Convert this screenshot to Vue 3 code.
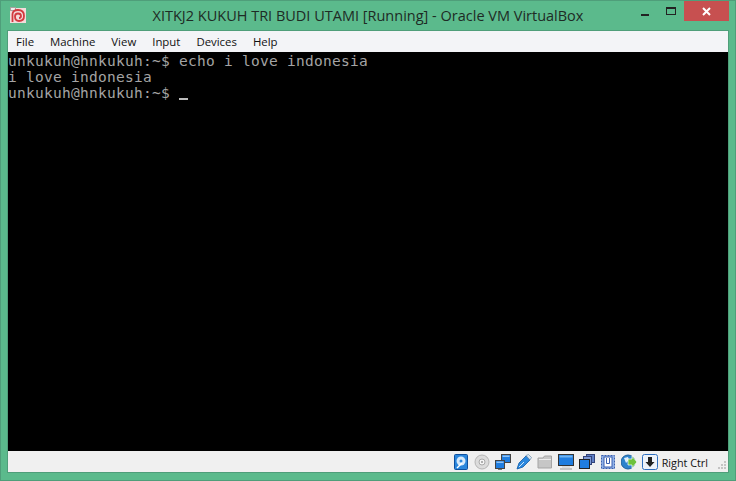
<script setup>
const menus = ['File', 'Machine', 'View', 'Input', 'Devices', 'Help']
</script>

<template>
  <div class="win">
    <header class="titlebar">
      <svg class="appicon" width="16" height="16" viewBox="0 0 16 16">
        <rect x="0" y="1" width="16" height="15" fill="#f3dcdb" />
        <rect x="0" y="0" width="6" height="4" fill="#a9a29e" />
        <rect x="1" y="1" width="4" height="2" fill="#eee" />
        <path d="M2.5 15V7Q3 3 8 3Q14 3 14 9Q14 14 9 14Q5 14 5 9.5Q5 6.5 8 6.5Q11 6.5 11 9Q11 11 9 11" fill="none" stroke="#d23a40" stroke-width="1.8" />
      </svg>
      <span class="title">XITKJ2 KUKUH TRI BUDI UTAMI [Running] - Oracle VM VirtualBox</span>
      <div class="controls">
        <span class="btn"><i class="min"></i></span>
        <span class="btn"><i class="max"></i></span>
        <span class="close">
          <svg width="9" height="9" viewBox="0 0 9 9"><path d="M1 1L8 8M8 1L1 8" stroke="#fff" stroke-width="2" /></svg>
        </span>
      </div>
    </header>
    <div class="client">
      <nav class="menubar">
        <span v-for="m in menus" :key="m">{{ m }}</span>
      </nav>
      <pre class="term">unkukuh@hnkukuh:~$ echo i love indonesia
i love indonesia
unkukuh@hnkukuh:~$ <b class="cursor"></b></pre>
      <footer class="status">
        <svg class="ico" width="16" height="16" viewBox="0 0 16 16">
          <rect x="1.5" y="0.5" width="13" height="15" rx="1" fill="#2a86dc" stroke="#0d4f9e" />
          <circle cx="8" cy="7" r="4.5" fill="#d6e9fa" />
          <circle cx="8" cy="7" r="1.5" fill="#2a86dc" />
          <path d="M4 14L9 9" stroke="#fff" stroke-width="1.5" />
        </svg>
        <svg class="ico" width="16" height="16" viewBox="0 0 16 16">
          <circle cx="8" cy="8" r="7" fill="#dcdcdc" stroke="#b5b5b5" />
          <circle cx="8" cy="8" r="3" fill="#f5f5f5" stroke="#aaa" />
          <circle cx="8" cy="8" r="1" fill="#999" />
        </svg>
        <svg class="ico" width="16" height="16" viewBox="0 0 16 16">
          <rect x="6.5" y="0.5" width="9" height="8" fill="#1f7de0" stroke="#444" />
          <rect x="7.5" y="1.5" width="7" height="1.5" fill="#8fc4f5" />
          <rect x="0.5" y="6.5" width="9" height="8" fill="#1f7de0" stroke="#444" />
          <rect x="1.5" y="7.5" width="7" height="1.5" fill="#8fc4f5" />
          <path d="M3 15.5H7" stroke="#777" />
        </svg>
        <svg class="ico" width="16" height="16" viewBox="0 0 16 16">
          <path d="M1 15L3 9L10 2L14 6L7 13Z" fill="#2b88de" stroke="#0d5aa8" stroke-width="0.8" />
          <path d="M10 1.5L12.5 0.5L15.5 3.5L14 6Z" fill="#d8e6f2" stroke="#5d7f9e" stroke-width="0.6" />
          <path d="M3 13L8 8" stroke="#cfe6fa" />
        </svg>
        <svg class="ico" width="16" height="16" viewBox="0 0 16 16">
          <path d="M1 14V4H6L7.5 2H14.5V14Z" fill="#c6c6c6" stroke="#a5a5a5" />
          <path d="M2 5H14V6H2Z" fill="#ededed" />
        </svg>
        <svg class="ico" width="16" height="16" viewBox="0 0 16 16">
          <rect x="0.5" y="0.5" width="15" height="11" fill="#1f7de0" stroke="#333" />
          <rect x="1.5" y="1.5" width="13" height="2" fill="#6fb3f0" />
          <rect x="4" y="12" width="8" height="2" fill="#ddd" />
          <path d="M2 15H14" stroke="#999" />
        </svg>
        <svg class="ico" width="16" height="16" viewBox="0 0 16 16">
          <rect x="7.5" y="0.5" width="8" height="8" fill="#5f7fc6" stroke="#33437a" />
          <rect x="4.5" y="2.5" width="8" height="8" fill="#7f9ad6" stroke="#33437a" />
          <rect x="0.5" y="5.5" width="10" height="9" fill="#1f7de0" stroke="#222" />
        </svg>
        <svg class="ico" width="16" height="16" viewBox="0 0 16 16">
          <rect x="1.5" y="1.5" width="13" height="13" fill="#8eb1e8" stroke="#3a5fae" stroke-dasharray="2 1" />
          <rect x="4" y="3" width="8" height="10" fill="#fff" stroke="#3a5fae" />
          <path d="M6.5 4V9.5H9.5V4" fill="none" stroke="#3a5fae" />
        </svg>
        <svg class="ico" width="16" height="16" viewBox="0 0 16 16">
          <circle cx="7" cy="8" r="7" fill="#2b82cc" stroke="#1e5f9a" />
          <path d="M3 4L7 3L8 6L5 9Z" fill="#dfeefa" />
          <path d="M7 5H11V2L16 8L11 14V11H7Z" fill="#6ec23c" stroke="#fff" stroke-width="0.7" />
        </svg>
        <svg class="ico" width="16" height="16" viewBox="0 0 16 16">
          <rect x="0.5" y="0.5" width="15" height="15" rx="2" fill="#eef3fa" stroke="#2f6fbf" />
          <path d="M6 3H10V8H12.5L8 13L3.5 8H6Z" fill="#222" />
        </svg>
        <span class="hostkey">Right Ctrl</span>
        <svg class="grip" width="10" height="10" viewBox="0 0 10 10">
          <path d="M7 0h2v2H7zM4 3h2v2H4zM7 3h2v2H7zM1 6h2v2H1zM4 6h2v2H4zM7 6h2v2H7z" fill="#c4c4c4" />
        </svg>
      </footer>
    </div>
  </div>
</template>

<style>
html, body { margin: 0; background: #5bba8c; }
</style>

<style scoped>
.win {
  width: 736px;
  height: 481px;
  box-sizing: border-box;
  background: #5bba8c;
  border: 1px solid #4f9e7a;
  padding: 0 7px 8px;
  display: flex;
  flex-direction: column;
  font-family: "Open Sans", "Noto Sans", sans-serif;
  overflow: hidden;
}
.titlebar {
  height: 30px;
  flex: none;
  display: flex;
  align-items: center;
  position: relative;
}
.appicon { margin: 0 0 2px 2px; }
.title {
  position: absolute;
  left: 0;
  right: 0;
  top: 4px;
  text-align: center;
  font-size: 14.5px;
  line-height: 22px;
  color: #1e2b25;
  white-space: nowrap;
}
.controls {
  margin-left: auto;
  margin-right: -1px;
  align-self: flex-start;
  display: flex;
  align-items: flex-start;
  position: relative;
}
.btn {
  width: 26px;
  height: 20px;
  display: flex;
  align-items: center;
  justify-content: center;
}
.min {
  display: block;
  width: 8px;
  height: 2px;
  margin-top: 7px;
  background: #222;
}
.max {
  display: block;
  box-sizing: border-box;
  width: 10px;
  height: 8px;
  border: 1px solid #222;
  border-top-width: 2px;
}
.close {
  width: 45px;
  height: 20px;
  background: #c75050;
  display: flex;
  align-items: center;
  justify-content: center;
}
.client {
  flex: 1;
  min-height: 0;
  display: flex;
  flex-direction: column;
  outline: 1px solid #4f9e7a;
}
.menubar {
  height: 21px;
  flex: none;
  background: #f3f4f7;
  display: flex;
  align-items: center;
  gap: 16px;
  padding-left: 8px;
  font-size: 11.4px;
  color: #111;
}
.term {
  flex: 1;
  min-height: 0;
  margin: 0;
  padding-top: 1px;
  background: #000;
  color: #a4a4a4;
  font-family: "DejaVu Sans Mono", monospace;
  font-size: 14.5px;
  letter-spacing: 0.27px;
  line-height: 16px;
}
.cursor {
  display: inline-block;
  width: 9px;
  height: 2px;
  background: #bbb;
  vertical-align: -2px;
}
.status {
  height: 21px;
  flex: none;
  background: #f0f0f0;
  display: flex;
  align-items: center;
  justify-content: flex-end;
  gap: 5px;
  font-size: 10.8px;
  color: #111;
  position: relative;
}
.ico { flex: none; }
.hostkey { margin: 1px 20px 0 -1px; }
.grip { position: absolute; right: 1px; bottom: 1px; }
</style>
